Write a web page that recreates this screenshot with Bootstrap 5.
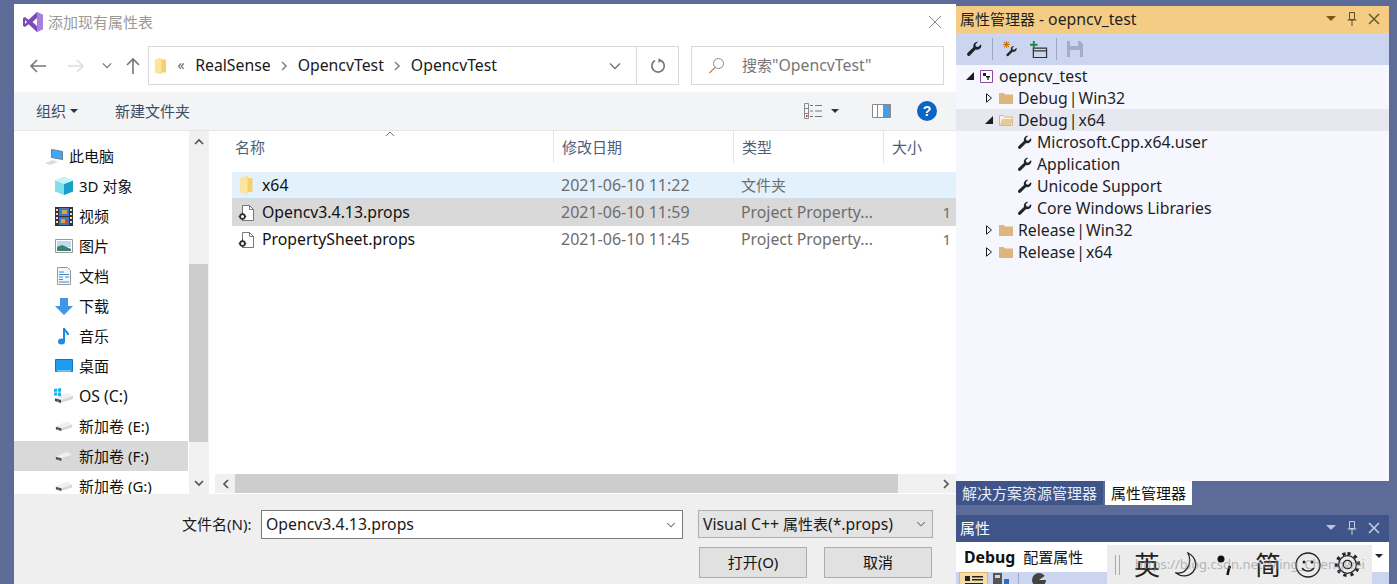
<!DOCTYPE html>
<html lang="zh-CN">
<head>
  <meta charset="UTF-8" />
  <title>添加现有属性表</title>
  <link href="https://cdn.jsdelivr.net/npm/bootstrap@5.3.2/dist/css/bootstrap.min.css" rel="stylesheet" />
  <style>
    html, body { height: 584px; overflow: hidden; }
    body { background: #5d6b99; font-family: "Noto Sans", "Noto Sans CJK SC", sans-serif; font-size: 15px; line-height: 20px; color: #1a1a1a; }
    .desk { height: 584px; }
    .lat { font-size: 15.8px; }
    .num { font-size: 16px; }
    .tight { word-spacing: -3px; }

    /* file dialog */
    .dlg { width: 942px; height: 580px; margin: 4px 0 0 14px; background: #fff; flex: none; }
    .dlg-title { height: 36px; padding-left: 9px; color: #9a9a9a; gap: 5px; }
    .dlg-close { margin-left: auto; margin-right: 14px; }
    .dlg-addr { height: 52px; padding: 6px 12px 7px 0; }
    .nav-btns { width: 134px; padding-left: 15px; flex: none; }
    .nav-back { margin-right: 20px; }
    .nav-next { margin-right: 17px; }
    .nav-hist { margin-right: 14px; }
    .addr-box { width: 531px; height: 39px; border: 1px solid #d9d9d9; }
    .addr-path { padding-left: 5px; gap: 10.5px; flex: 1; }
    .addr-path span, .search-box span { padding-bottom: 2px; }
    .addr-sep { color: #666; font-size: 14px; }
    .addr-drop { width: 43px; height: 100%; }
    .addr-refresh { width: 42px; height: 100%; border-left: 1px solid #d9d9d9; }
    .search-box { width: 253px; height: 39px; margin-left: 12px; border: 1px solid #d9d9d9; color: #777; padding-left: 16px; gap: 17px; }
    .dlg-tools { height: 39px; background: #f3f4f6; border-bottom: 1px solid #e6e6e6; padding-left: 22px; color: #3e4c63; }
    .tool-new { margin-left: 37px; }
    .tool-right { margin-left: auto; margin-right: 19px; }
    .view-list { margin-right: 8px; }
    .view-caret { margin-right: 33px; }
    .view-pane { margin-right: 26px; }
    .dlg-main { height: 363px; }

    /* left tree */
    .side { width: 175px; flex: none; overflow: hidden; padding-top: 10px; }
    .side-row { height: 30px; padding-left: 41px; gap: 6px; color: #111; white-space: nowrap; }
    .side-row.top { padding-left: 31px; gap: 5px; }
    .side-row.on { background: #d9d9d9; margin-right: 1px; }
    .side-row svg { flex: none; }
    .os-ic { margin: 0 -1px; }
    .vbar { width: 19px; flex: none; background: #f0f0f0; }
    .vbar-thumb { height: 178px; margin-top: 113px; background: #cdcdcd; }
    .vbar-up { height: 20px; }
    .vbar-down { height: 22px; }
    .vgap { width: 7px; flex: none; border-left: 1px solid #f0f0f0; }

    /* file list */
    .flist { flex: 1; min-width: 0; }
    .fhead, .frow { display: grid; grid-template-columns: 321px 180px 150px 1fr; margin-left: 17px; }
    .fhead { height: 32px; color: #4c607a; position: relative; }
    .fhead > div { padding-left: 8px; border-left: 1px solid #e5e5e5; line-height: 32px; }
    .fhead > div:first-child { padding-left: 3px; border-left: 0; }
    .sort-mark { position: absolute; left: 153px; top: 0; }
    .fbody { height: 311px; padding-top: 9px; }
    .frow { height: 27px; line-height: 27px; color: #6d6d6d; }
    .frow > div { padding-left: 8px; white-space: nowrap; overflow: hidden; }
    .frow > .fname { padding-left: 6px; color: #111; gap: 7px; }
    .frow .fsize { text-align: right; padding-right: 5px; }
    .frow.hov { background: #e3f1fc; border-bottom: 1px solid #cfdbe6; }
    .frow.sel { background: #d9d9d9; }
    .hbar { height: 19px; background: #f0f0f0; margin-bottom: 1px; }
    .hbar-arrow { width: 20px; flex: none; }
    .hbar-thumb { width: 663px; height: 100%; background: #cdcdcd; }

    /* dialog footer */
    .dlg-foot { height: 90px; background: #efefef; padding: 16px 23px 0 168px; }
    .foot-line { height: 29px; }
    .fname-label { width: 79px; flex: none; padding-bottom: 1px; }
    .fname-input { width: 422px; height: 29px; background: #fff; border: 1px solid #7a7a7a; padding: 0 6px 0 4px; }
    .ftype { width: 235px; height: 28px; margin-left: 15px; background: #e4e4e4; border: 1px solid #adadad; padding: 0 6px 0 4px; }
    .fname-input span, .ftype > span { padding-bottom: 1px; }
    .foot-btns { margin-top: 8px; padding-left: 517px; gap: 17px; }
    .foot-btn { width: 108px; height: 31px; padding: 0 0 1px; border-radius: 0; background: #e1e1e1; border: 1px solid #adadad; font-size: 15px; line-height: 20px; color: #111; }

    /* property manager */
    .vs-side { width: 433px; margin-top: 6px; flex: none; position: relative; }
    .pane-title { height: 27px; padding: 0 9px 2px 4px; background: #f5cc84; color: #1f1f1f; }
    .pane-btns { margin-left: auto; gap: 7px; }
    .pane-bar { height: 32px; background: #ccd5f0; padding-left: 10px; }
    .bar-sep { width: 1px; height: 22px; background: #9aa7c7; }
    .pb-wrench { margin-right: 10px; }
    .pb-sep1 { margin-right: 9px; }
    .pb-wiz { margin-right: 12px; }
    .pb-add { margin-right: 8px; }
    .pb-sep2 { margin-right: 10px; }
    .pane-tree { height: 416px; background: #f6f7fe; color: #1e1e1e; }
    .tree-row { height: 22px; white-space: nowrap; }
    .tree-row.on { background: #e6e7ef; }
    .lv0 { padding-left: 9px; } .lv1 { padding-left: 28px; } .lv2 { padding-left: 61px; }
    .tree-row .tw { width: 10px; margin-right: 5px; flex: none; }
    .tree-row .ic { margin-right: 5px; flex: none; }
    .lv0 .ic { margin-right: 6px; }
    .tabs-line { height: 24px; gap: 2px; }
    .tab-off { width: 147px; background: #3f5589; color: #e6ecf8; padding-left: 6px; }
    .tab-on { width: 87px; background: #fff; color: #111; padding-left: 6px; }
    .pane-title.dark { background: #3f5589; color: #fff; margin-top: 10px; }
    .prop-head { height: 30px; background: #fff; padding-left: 8px; gap: 8px; color: #111; }
    .prop-bar { height: 20px; background: #ccd5f0; padding-left: 3px; gap: 4px; }
    .prop-view { width: 29px; height: 20px; background: #f5dca8; border: 1px solid #e0b66c; padding: 2px 0 0 5px; }
    .prop-sep { width: 1px; height: 14px; background: #9aa7c7; margin: 1px 8px 0 4px; }

    /* input method bar over the properties pane */
    .ime-bar { position: absolute; left: 151px; top: 539px; width: 265px; height: 39px; background: #ececec; padding-left: 8px; color: #222; font-size: 26px; overflow: hidden; }
    .ime-bar > * { flex: none; }
    .ime-grip { width: 5px; height: 20px; border-left: 1px solid #aaa; border-right: 1px solid #aaa; margin-right: 14px; }
    .ime-moon { margin: 0 17px 0 15px; }
    .ime-dots { margin-right: 21px; }
    .ime-smile { margin: 0 14px; }
    .ime-mark { position: absolute; left: 28px; top: 9px; font-size: 13px; line-height: 20px; color: #888; opacity: .55; white-space: nowrap; }
    .ime-more { position: absolute; left: 419px; top: 548px; width: 0; height: 0; border: 4px solid transparent; border-top: 4px solid #222; }
  </style>
</head>

<body>
  <svg width="0" height="0" class="position-absolute">
    <defs>
      <symbol id="i-wrench" viewBox="0 0 16 16">
        <path fill="currentColor" d="M15.4 4.6a4.3 4.3 0 0 1-5.7 4L3.9 14.500a1.700 1.700 0 0 1-2.400-2.400l5.900-5.800A4.300 4.300 0 0 1 12 .8L9.400 3.400l.5 2.200 2.200.5 2.600-2.600c.4.300.7.700.7 1.100z" />
      </symbol>
      <symbol id="i-vfolder" viewBox="0 0 14 18">
        <path fill="#f6cf6e" d="M1 2 8 0v2h5v14H8v2l-7-2z" />
        <path fill="#fde59b" d="M1 2 8 0v18l-7-2z" />
      </symbol>
      <symbol id="i-drive" viewBox="0 0 20 12">
        <path fill="#d6d6d6" d="M1 6 13 1l6 3v3L6 11 1 9z" />
        <path fill="#f0f0f0" d="M1 6 13 1l6 3L7 8z" />
        <path fill="#444" d="M1 6.500 7 8v3L1 9z" />
        <path fill="#5bb55b" d="M3 8.300 5 8.800v1L3 9.300z" />
      </symbol>
      <symbol id="i-props" viewBox="0 0 17 18">
        <path fill="#fff" stroke="#777" d="M4.500 1.500h7l4 4v11h-11z" />
        <path fill="none" stroke="#777" d="M11.500 1.500v4h4" />
        <circle cx="4.500" cy="12.500" r="2.400" fill="#fff" stroke="#333" stroke-width="1.800" />
        <path stroke="#333" stroke-width="1.200" d="M4.500 8.600v1.300M4.500 15v1.300M.6 12.500h1.300M7 12.500h1.300" />
      </symbol>
      <symbol id="i-pfolder" viewBox="0 0 14 12">
        <path fill="#dcb67a" d="M0 1h5l1 1.500h8V12H0z" />
      </symbol>
      <symbol id="i-tri-open" viewBox="0 0 10 10">
        <path fill="#1e1e1e" d="M9 1v8H1z" />
      </symbol>
      <symbol id="i-tri-shut" viewBox="0 0 10 10">
        <path fill="none" stroke="#1e1e1e" d="M2.500 .8v8.400L7.500 5z" />
      </symbol>
      <symbol id="i-chev-down" viewBox="0 0 12 8">
        <path fill="none" stroke="currentColor" stroke-width="1.400" d="M1 1.500 6 6.500l5-5" />
      </symbol>
      <symbol id="i-crumb" viewBox="0 0 6 10">
        <path fill="none" stroke="#888" stroke-width="1.600" d="M1 1l4 4-4 4" />
      </symbol>
    </defs>
  </svg>

  <div class="desk d-flex">
    <!-- file dialog -->
    <div class="dlg d-flex flex-column">
      <div class="dlg-title d-flex align-items-center">
        <svg width="20" height="20" viewBox="0 0 20 20">
          <path fill="#7b4bb8" fill-rule="evenodd" d="M14 0l6 3v14l-6 3-8.500-7.800L2 15l-2-1V6l2-1 3.500 2.800zM14 6l-4.500 4 4.500 4zM2 8v4l2-2z" />
          <path fill="#a67fe0" d="M14 0l6 3v14l-6 3V14L14 6z" />
        </svg>
        <span>添加现有属性表</span>
        <svg class="dlg-close" width="14" height="14" viewBox="0 0 14 14"><path stroke="#888" fill="none" d="M1 1l12 12M13 1 1 13" /></svg>
      </div>

      <div class="dlg-addr d-flex align-items-center">
        <div class="nav-btns d-flex align-items-center">
          <svg class="nav-back" width="18" height="14" viewBox="0 0 18 14"><path fill="none" stroke="#777" stroke-width="1.600" d="M17 7H2M8 1 2 7l6 6" /></svg>
          <svg class="nav-next" width="18" height="14" viewBox="0 0 18 14"><path fill="none" stroke="#ddd" stroke-width="1.600" d="M1 7h15M10 1l6 6-6 6" /></svg>
          <svg class="nav-hist text-secondary" width="10" height="7"><use href="#i-chev-down" /></svg>
          <svg width="14" height="18" viewBox="0 0 14 18"><path fill="none" stroke="#777" stroke-width="1.600" d="M7 17V2M1 8l6-6 6 6" /></svg>
        </div>
        <div class="addr-box d-flex align-items-center">
          <div class="addr-path d-flex align-items-center">
            <svg width="13" height="18"><use href="#i-vfolder" /></svg>
            <span class="addr-sep">&laquo;</span>
            <span class="lat">RealSense</span>
            <svg width="6" height="10"><use href="#i-crumb" /></svg>
            <span class="lat">OpencvTest</span>
            <svg width="6" height="10"><use href="#i-crumb" /></svg>
            <span class="lat">OpencvTest</span>
          </div>
          <div class="addr-drop d-flex align-items-center justify-content-center text-secondary"><svg width="12" height="8"><use href="#i-chev-down" /></svg></div>
          <div class="addr-refresh d-flex align-items-center justify-content-center">
            <svg width="16" height="16" viewBox="0 0 16 16"><path fill="none" stroke="#777" stroke-width="1.700" d="M10.500 2.200A6.200 6.200 0 1 1 5 2.500" /><path fill="#777" d="M8.500 0v5L12 2.500z" /></svg>
          </div>
        </div>
        <div class="search-box d-flex align-items-center">
          <svg width="17" height="17" viewBox="0 0 17 17"><circle cx="10.500" cy="6.500" r="5" fill="none" stroke="#888" /><path stroke="#b98a55" stroke-width="1.200" d="M7 10.500 1.500 16" /></svg>
          <span>搜索<span class="lat">"OpencvTest"</span></span>
        </div>
      </div>

      <div class="dlg-tools d-flex align-items-center">
        <span>组织</span>
        <svg class="ms-1" width="8" height="4" viewBox="0 0 8 4"><path fill="#24364f" d="M0 0h8L4 4z" /></svg>
        <span class="tool-new">新建文件夹</span>
        <div class="tool-right d-flex align-items-center">
          <svg class="view-list" width="19" height="16" viewBox="0 0 19 16">
            <path fill="none" stroke="#888" d="M.5.500h4v15h-4zM.5 5.500h4M.5 10.500h4" />
            <path stroke="#777" d="M6 2.500h3M11 2.500h7M6 8h3M11 8h7M6 13.500h3M11 13.500h7" />
            <path fill="#c33" d="M2 12h1.500v2H2z" />
          </svg>
          <svg class="view-caret" width="8" height="4" viewBox="0 0 8 4"><path fill="#24364f" d="M0 0h8L4 4z" /></svg>
          <svg class="view-pane" width="19" height="14" viewBox="0 0 19 14">
            <path fill="#fff" stroke="#888" d="M.5.500h18v13H.5z" />
            <path fill="#4a9be8" d="M11 1h7v12h-7z" />
            <path stroke="#888" d="M5.500 1v12" />
          </svg>
          <svg width="20" height="20" viewBox="0 0 20 20">
            <circle cx="10" cy="10" r="10" fill="#0a66c2" />
            <text x="10" y="15" text-anchor="middle" fill="#fff" font-size="14" font-weight="700" font-family="Liberation Sans, sans-serif">?</text>
          </svg>
        </div>
      </div>

      <div class="dlg-main d-flex">
        <div class="side">
          <div class="side-row top d-flex align-items-center">
            <svg width="19" height="17" viewBox="0 0 19 17">
              <path fill="#3fa9f5" stroke="#6b7f94" d="M6.500 1.500l11 2v8l-11-2z" />
              <path fill="#dcdcdc" d="M0 15l8-3 5 2-8 3z" />
            </svg>
            <span>此电脑</span>
          </div>
          <div class="side-row d-flex align-items-center">
            <svg width="18" height="18" viewBox="0 0 18 18">
              <path fill="#7fe0ea" d="M9 0l9 3.500v11L9 18 0 14.500v-11z" />
              <path fill="#1a9ecb" d="M9 7l9-3.500v11L9 18z" />
              <path fill="#c8f4f7" d="M9 0l9 3.500L9 7 0 3.500z" />
            </svg>
            <span>3D 对象</span>
          </div>
          <div class="side-row d-flex align-items-center">
            <svg width="18" height="19" viewBox="0 0 18 19">
              <path fill="#333" d="M0 0h18v19H0z" />
              <path fill="#ddd" d="M1 2h2v2H1zM1 6h2v2H1zM1 10h2v2H1zM1 14h2v2H1zM15 2h2v2h-2zM15 6h2v2h-2zM15 10h2v2h-2zM15 14h2v2h-2z" />
              <path fill="#3a78c9" d="M4 1h10v8H4zM4 10h10v8H4z" />
              <path fill="#e2a33a" d="M7 3h5v4H7zM6 12h4v4H6z" />
              <path fill="#c8442f" d="M11 13h2v3h-2z" />
            </svg>
            <span>视频</span>
          </div>
          <div class="side-row d-flex align-items-center">
            <svg width="18" height="14" viewBox="0 0 18 14">
              <path fill="#fff" stroke="#999" d="M.5.500h17v13H.5z" />
              <path fill="#b9dcf2" d="M2 2h14v6H2z" />
              <path fill="#3f7f70" d="M2 8l5-2 9 4v2H2z" />
            </svg>
            <span>图片</span>
          </div>
          <div class="side-row d-flex align-items-center">
            <svg width="18" height="18" viewBox="0 0 18 18">
              <path fill="#f5f5f5" stroke="#9a9a9a" d="M2.500.500h10l3 3v14h-13z" />
              <path stroke="#3b8ed8" d="M4 5h5M4 7.500h10M4 10h4M10 10h4M4 12.500h4M4 15h10" />
            </svg>
            <span>文档</span>
          </div>
          <div class="side-row d-flex align-items-center">
            <svg width="18" height="17" viewBox="0 0 18 17"><path fill="#3f95e6" d="M5 0h8v8h5l-9 9-9-9h5z" /></svg>
            <span>下载</span>
          </div>
          <div class="side-row d-flex align-items-center">
            <svg width="18" height="18" viewBox="0 0 18 18">
              <path fill="none" stroke="#1e88e5" stroke-width="2" d="M9 14V1c0 3 4 3 4 7" />
              <ellipse cx="6.500" cy="14.500" rx="3.500" ry="3" fill="#1e88e5" />
            </svg>
            <span>音乐</span>
          </div>
          <div class="side-row d-flex align-items-center">
            <svg width="18" height="14" viewBox="0 0 18 14">
              <path fill="#1f9bf0" stroke="#0a78c8" d="M.5.500h17v12H.5z" />
              <path stroke="#cfeaff" d="M2 12h14" />
            </svg>
            <span>桌面</span>
          </div>
          <div class="side-row d-flex align-items-center">
            <svg width="20" height="16" viewBox="0 0 20 16" class="os-ic">
              <use href="#i-drive" y="4" width="20" height="12" />
              <path fill="#12b4f0" d="M0 1l3-.5v3.300H0zM3.800.400 7 0v3.800H3.800zM0 4.500h3v3H0zM3.800 4.500H7v3.800l-3.200-.4z" />
            </svg>
            <span class="lat">OS (C:)</span>
          </div>
          <div class="side-row d-flex align-items-center"><svg width="18" height="11"><use href="#i-drive" /></svg><span>新加卷 (E:)</span></div>
          <div class="side-row on d-flex align-items-center"><svg width="18" height="11"><use href="#i-drive" /></svg><span>新加卷 (F:)</span></div>
          <div class="side-row d-flex align-items-center"><svg width="18" height="11"><use href="#i-drive" /></svg><span>新加卷 (G:)</span></div>
        </div>

        <div class="vbar d-flex flex-column">
          <div class="vbar-up d-flex align-items-center justify-content-center">
            <svg width="10" height="7" viewBox="0 0 10 7"><path fill="none" stroke="#555" stroke-width="1.700" d="M1 6l4-4 4 4" /></svg>
          </div>
          <div class="vbar-thumb"></div>
          <div class="flex-grow-1"></div>
          <div class="vbar-down d-flex align-items-center justify-content-center">
            <svg width="10" height="7" viewBox="0 0 10 7"><path fill="none" stroke="#555" stroke-width="1.700" d="M1 1l4 4 4-4" /></svg>
          </div>
        </div>
        <div class="vgap"></div>

        <div class="flist d-flex flex-column">
          <div class="fhead">
            <div>名称</div>
            <div>修改日期</div>
            <div>类型</div>
            <div>大小</div>
            <svg class="sort-mark" width="10" height="6" viewBox="0 0 10 6"><path fill="none" stroke="#777" d="M1 5l4-4 4 4" /></svg>
          </div>
          <div class="fbody">
            <div class="frow hov">
              <div class="fname d-flex align-items-center"><svg width="17" height="18"><use href="#i-vfolder" /></svg><span class="lat">x64</span></div>
              <div class="num">2021-06-10 11:22</div>
              <div>文件夹</div>
              <div></div>
            </div>
            <div class="frow sel">
              <div class="fname d-flex align-items-center"><svg width="17" height="18"><use href="#i-props" /></svg><span class="lat">Opencv3.4.13.props</span></div>
              <div class="num">2021-06-10 11:59</div>
              <div class="lat">Project Property...</div>
              <div class="fsize">1</div>
            </div>
            <div class="frow">
              <div class="fname d-flex align-items-center"><svg width="17" height="18"><use href="#i-props" /></svg><span class="lat">PropertySheet.props</span></div>
              <div class="num">2021-06-10 11:45</div>
              <div class="lat">Project Property...</div>
              <div class="fsize">1</div>
            </div>
          </div>
          <div class="hbar d-flex align-items-center">
            <div class="hbar-arrow d-flex justify-content-center"><svg width="7" height="10" viewBox="0 0 7 10"><path fill="none" stroke="#555" stroke-width="1.700" d="M6 1 2 5l4 4" /></svg></div>
            <div class="hbar-thumb"></div>
            <div class="flex-grow-1"></div>
            <div class="hbar-arrow d-flex justify-content-center"><svg width="7" height="10" viewBox="0 0 7 10"><path fill="none" stroke="#555" stroke-width="1.700" d="M1 1l4 4-4 4" /></svg></div>
          </div>
        </div>
      </div>

      <div class="dlg-foot">
        <div class="foot-line d-flex">
          <span class="fname-label d-flex align-items-center">文件名(N):</span>
          <div class="fname-input d-flex align-items-center justify-content-between">
            <span class="lat">Opencv3.4.13.props</span>
            <svg class="text-secondary" width="10" height="6"><use href="#i-chev-down" /></svg>
          </div>
          <div class="ftype d-flex align-items-center justify-content-between">
            <span><span class="lat">Visual C++</span> 属性表<span class="lat">(*.props)</span></span>
            <svg class="text-secondary" width="10" height="6"><use href="#i-chev-down" /></svg>
          </div>
        </div>
        <div class="foot-btns d-flex">
          <button type="button" class="btn foot-btn">打开(O)</button>
          <button type="button" class="btn foot-btn">取消</button>
        </div>
      </div>
    </div>

    <!-- property manager -->
    <div class="vs-side">
      <div class="pane-title d-flex align-items-center">
        <span>属性管理器 <span class="lat">- oepncv_test</span></span>
        <div class="pane-btns d-flex align-items-center">
          <svg width="10" height="5" viewBox="0 0 10 5"><path fill="#7a5a12" d="M0 0h10L5 5z" /></svg>
          <svg class="mx-1" width="10" height="14" viewBox="0 0 10 14"><path fill="none" stroke="#5c4a20" d="M2.500.500h5v7h-5zM.5 8h9M5 8v6" /></svg>
          <svg width="12" height="12" viewBox="0 0 12 12"><path stroke="#6a5a30" stroke-width="1.500" d="M1 1l10 10M11 1 1 11" /></svg>
        </div>
      </div>
      <div class="pane-bar d-flex align-items-center">
        <svg class="pb-wrench text-dark" width="16" height="16"><use href="#i-wrench" /></svg>
        <span class="bar-sep pb-sep1"></span>
        <svg class="pb-wiz text-dark" width="16" height="16" viewBox="0 0 18 18">
          <path stroke="#c8791b" stroke-width="1.200" d="M5 0v8M1 4h8M2 1l6 6M8 1 2 7" />
          <use href="#i-wrench" x="4" y="5" width="13" height="13" />
        </svg>
        <svg class="pb-add" width="18" height="17" viewBox="0 0 19 18">
          <path fill="none" stroke="#333" stroke-width="1.300" d="M3.500 7.500h14v10h-14zM3.500 10.500h14" />
          <path stroke="#1f8a3b" stroke-width="2" d="M4 0v8M0 4h8" />
        </svg>
        <span class="bar-sep pb-sep2"></span>
        <svg width="16" height="16" viewBox="0 0 16 16">
          <path fill="#a3adc4" d="M0 0h13l3 3v13H0z" />
          <path fill="#ccd5f0" d="M3 0h8v5H3zM3 9h10v7H3z" />
        </svg>
      </div>
      <div class="pane-tree">
        <div class="tree-row lv0 d-flex align-items-center">
          <svg class="tw" width="10" height="10"><use href="#i-tri-open" /></svg>
          <svg class="ic" width="13" height="13" viewBox="0 0 13 13">
            <path fill="#fff" stroke="#8d4a9c" d="M.5.500h12v12H.5z" />
            <path fill="#222" d="M3 3h3v3H3zM6 6h4v1.500H8.700V10H7.300V7.500H6z" />
          </svg>
          <span class="lat">oepncv_test</span>
        </div>
        <div class="tree-row lv1 d-flex align-items-center"><svg class="tw" width="10" height="10"><use href="#i-tri-shut" /></svg><svg class="ic" width="14" height="12"><use href="#i-pfolder" /></svg><span class="lat tight">Debug | Win32</span></div>
        <div class="tree-row lv1 on d-flex align-items-center">
          <svg class="tw" width="10" height="10"><use href="#i-tri-open" /></svg>
          <svg class="ic" width="14" height="12" viewBox="0 0 14 12"><path fill="#f6f3e8" stroke="#dcb67a" d="M.5 11.500v-10h4l1 1.500h8v8.500z" /><path fill="#e8c995" d="M1 11l2-6h11l-2 6z" /></svg>
          <span class="lat tight">Debug | x64</span>
        </div>
        <div class="tree-row lv2 d-flex align-items-center"><svg class="ic text-body" width="15" height="15"><use href="#i-wrench" /></svg><span class="lat">Microsoft.Cpp.x64.user</span></div>
        <div class="tree-row lv2 d-flex align-items-center"><svg class="ic text-body" width="15" height="15"><use href="#i-wrench" /></svg><span class="lat">Application</span></div>
        <div class="tree-row lv2 d-flex align-items-center"><svg class="ic text-body" width="15" height="15"><use href="#i-wrench" /></svg><span class="lat">Unicode Support</span></div>
        <div class="tree-row lv2 d-flex align-items-center"><svg class="ic text-body" width="15" height="15"><use href="#i-wrench" /></svg><span class="lat">Core Windows Libraries</span></div>
        <div class="tree-row lv1 d-flex align-items-center"><svg class="tw" width="10" height="10"><use href="#i-tri-shut" /></svg><svg class="ic" width="14" height="12"><use href="#i-pfolder" /></svg><span class="lat tight">Release | Win32</span></div>
        <div class="tree-row lv1 d-flex align-items-center"><svg class="tw" width="10" height="10"><use href="#i-tri-shut" /></svg><svg class="ic" width="14" height="12"><use href="#i-pfolder" /></svg><span class="lat tight">Release | x64</span></div>
      </div>
      <div class="tabs-line d-flex">
        <div class="tab-off d-flex align-items-center">解决方案资源管理器</div>
        <div class="tab-on d-flex align-items-center">属性管理器</div>
      </div>
      <div class="pane-title dark d-flex align-items-center">
        <span>属性</span>
        <div class="pane-btns d-flex align-items-center">
          <svg width="10" height="5" viewBox="0 0 10 5"><path fill="#b8c4e0" d="M0 0h10L5 5z" /></svg>
          <svg class="mx-1" width="10" height="14" viewBox="0 0 10 14"><path fill="none" stroke="#c4cfe6" d="M2.500.500h5v7h-5zM.5 8h9M5 8v6" /></svg>
          <svg width="12" height="12" viewBox="0 0 12 12"><path stroke="#c4cfe6" stroke-width="1.500" d="M1 1l10 10M11 1 1 11" /></svg>
        </div>
      </div>
      <div class="prop-head d-flex align-items-center"><strong class="lat">Debug</strong><span>配置属性</span></div>
      <div class="prop-bar d-flex">
        <div class="prop-view">
          <svg class="d-block" width="18" height="10" viewBox="0 0 18 10"><path fill="#222" d="M0 1h5v5H0zM7 1h11v1.500H7zM7 4h11v1.500H7zM0 8h18v1.500H0z" /></svg>
        </div>
        <svg width="18" height="14" viewBox="0 0 18 14"><path fill="#555" d="M1 1h9v12H1z" /><path fill="#d5d5d5" d="M3 3h5v3H3z" /><path fill="#2a6fc2" d="M12 7h5v6h-5z" /></svg>
        <span class="prop-sep"></span>
        <svg width="16" height="14" viewBox="0 0 16 14"><circle cx="8" cy="8" r="7" fill="#444" /><path fill="#ccd5f0" d="M8 8h7V3z" /></svg>
      </div>
      <div class="ime-bar d-flex align-items-center">
        <span class="ime-mark">https://blog.csdn.net/Ming_Chengwei</span>
        <span class="ime-grip"></span>
        <span>英</span>
        <svg class="ime-moon" width="24" height="26" viewBox="0 0 24 26"><path fill="none" stroke="#222" stroke-width="1.300" d="M13 1c8 4 10 13 5 19-5 5-12 5-17 1 7 1 11-3 13-8 1-4 1-8-1-12z" /></svg>
        <svg class="ime-dots" width="18" height="24" viewBox="0 0 18 24"><circle cx="5" cy="6" r="3.500" fill="#111" /><path stroke="#111" stroke-width="2.500" d="M13 15l-1.500 7" /><circle cx="13.500" cy="14" r="1.500" fill="#111" /></svg>
        <span>简</span>
        <svg class="ime-smile" width="26" height="26" viewBox="0 0 26 26"><circle cx="13" cy="13" r="12" fill="none" stroke="#222" stroke-width="1.300" /><circle cx="9" cy="10" r="1.500" fill="#222" /><circle cx="17" cy="10" r="1.500" fill="#222" /><path fill="none" stroke="#222" stroke-width="1.300" d="M7 16c3 4 9 4 12 0" /></svg>
        <svg width="25" height="25" viewBox="0 0 24 24"><circle cx="12" cy="12" r="4" fill="none" stroke="#222" stroke-width="1.200" /><circle cx="12" cy="12" r="8.500" fill="none" stroke="#222" stroke-width="1.200" /><path stroke="#222" stroke-width="3" stroke-dasharray="3 3.700" fill="none" d="M12 1.500a10.500 10.500 0 1 1-.01 0" /></svg>
      </div>
      <span class="ime-more"></span>
    </div>
  </div>
</body>
</html>
